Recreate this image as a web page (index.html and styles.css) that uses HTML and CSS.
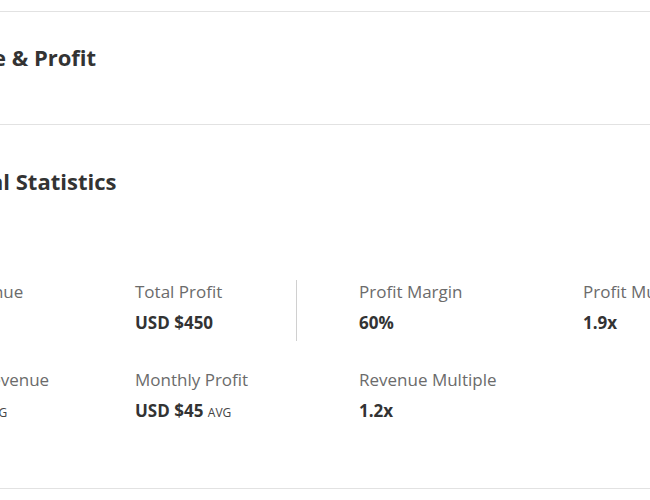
FILE: index.html
```html
<!DOCTYPE html>
<html>
<head>
<meta charset="utf-8">
<link rel="stylesheet" href="styles.css">
</head>
<body>
<div class="page">
  <section class="card card-top">
    <h2 class="title">Revenue &amp; Profit</h2>
  </section>
  <section class="card card-stats">
    <h2 class="title">Financial Statistics</h2>
    <div class="stats">
      <div class="stat">
        <div class="label">Total Revenue</div>
        <div class="value">USD $750</div>
      </div>
      <div class="stat stat-divided">
        <div class="label">Total Profit</div>
        <div class="value">USD $450</div>
      </div>
      <div class="stat">
        <div class="label">Profit Margin</div>
        <div class="value">60%</div>
      </div>
      <div class="stat">
        <div class="label">Profit Multiple</div>
        <div class="value">1.9x</div>
      </div>
      <div class="stat">
        <div class="label">Monthly Revenue</div>
        <div class="value">USD $75 <span class="avg">AVG</span></div>
      </div>
      <div class="stat">
        <div class="label">Monthly Profit</div>
        <div class="value">USD $45 <span class="avg">AVG</span></div>
      </div>
      <div class="stat">
        <div class="label">Revenue Multiple</div>
        <div class="value">1.2x</div>
      </div>
    </div>
  </section>
  <section class="card card-end"></section>
</div>
</body>
</html>
```

FILE: styles.css
```css
html, body {
  margin: 0;
  padding: 0;
  background: #ffffff;
  overflow: hidden;
}
body {
  font-family: "Open Sans", "Liberation Sans", sans-serif;
  color: #333333;
}
.page {
  padding-top: 11px;
  margin-left: -89px;
  width: 1000px;
}
.card {
  border-top: 1px solid #e2e2e2;
}
.title {
  margin: 0;
  font-family: "Open Sans", "Liberation Sans", sans-serif;
  font-weight: 700;
  font-size: 22px;
  line-height: 30px;
  color: #333333;
}
.card-top {
  padding: 30px 0 52px;
}
.card-stats {
  padding: 41px 0 0;
  height: 322px;
}
.stats {
  margin-top: 84px;
  display: grid;
  grid-template-columns: repeat(4, 162px);
  column-gap: 62px;
  row-gap: 27px;
}
.stat {
  height: 61px;
}
.stat-divided {
  border-right: 1px solid #d0d0d0;
}
.label {
  font-size: 17px;
  line-height: 24px;
  color: #6b6b6b;
}
.value {
  margin-top: 7px;
  font-size: 17px;
  font-weight: 700;
  line-height: 24px;
  color: #333333;
}
.avg {
  font-size: 12px;
  font-weight: 400;
  color: #444444;
}
```
